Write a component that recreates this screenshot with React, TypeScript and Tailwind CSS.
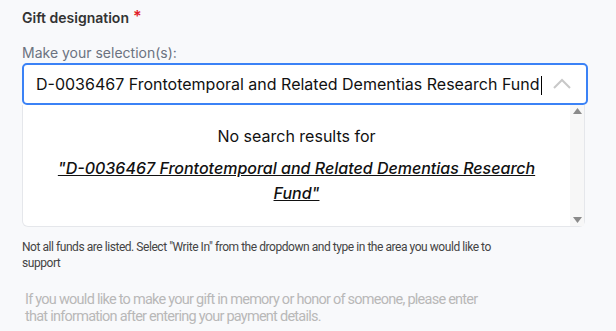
import React from "react";

export default function App() {
  return (
    <div className="w-[616px] h-[331px] bg-[#f8f9fb] overflow-hidden" style={{ fontFamily: "Inter, sans-serif" }}>
      <div className="pl-[22px] pr-[28px] pt-[8px]">
        <div className="flex items-start text-[14px] font-semibold text-[#333] leading-[20px]">
          <span>Gift designation</span>
          <span className="text-[#e11d2a] ml-[4px] text-[16px] leading-[16px]">*</span>
        </div>
        <div className="mt-[16px] text-[14px] text-[#6b7280] leading-[18px]">Make your selection(s):</div>
        <div className="mt-[1px] h-[42px] border-2 border-[#3b82f6] rounded-[5px] bg-white flex items-center pl-[12px] pr-[12px]">
          <span className="text-[16px] text-[#111] flex-1 whitespace-nowrap">
            D-0036467 Frontotemporal and Related Dementias Research Fund<span className="inline-block w-[1px] h-[19px] bg-black align-middle ml-[1px]"></span>
          </span>
          <svg width="20" height="12" viewBox="0 0 20 12" className="mr-[2px]">
            <path d="M2 10 L10 2 L18 10" fill="none" stroke="#c8c8c8" strokeWidth="2" />
          </svg>
        </div>
        <div className="w-[563px] h-[122px] bg-white border border-t-0 border-[#e5e7eb] rounded-b-[6px] flex">
          <div className="flex-1 flex flex-col items-center pt-[20px]">
            <div className="text-[16px] text-[#111] leading-[22px]">No search results for</div>
            <div className="mt-[9px] text-center text-[16px] italic font-medium underline text-[#111] leading-[25px] w-[490px]">
              "D-0036467 Frontotemporal and Related Dementias Research Fund"
            </div>
          </div>
          <div className="w-[14px] bg-[#f7f7f7] flex flex-col justify-between items-center py-[3px]">
            <svg width="9" height="6" viewBox="0 0 9 6"><path d="M4.5 0 L9 6 L0 6 Z" fill="#8a8a8a" /></svg>
            <svg width="9" height="6" viewBox="0 0 9 6"><path d="M0 0 L9 0 L4.5 6 Z" fill="#8a8a8a" /></svg>
          </div>
        </div>
        <div className="mt-[12px] w-[490px] text-[12px] tracking-[-0.45px] text-[#444] leading-[16px]" style={{ fontFamily: "Roboto, sans-serif" }}>
          Not all funds are listed. Select "Write In" from the dropdown and type in the area you would like to support
        </div>
        <div className="mt-[20px] pl-[3px] w-[480px] text-[14.5px] tracking-[-0.75px] text-[#b8b8b8] leading-[17px]" style={{ fontFamily: "Roboto, sans-serif" }}>
          If you would like to make your gift in memory or honor of someone, please enter that information after entering your payment details.
        </div>
      </div>
    </div>
  );
}
